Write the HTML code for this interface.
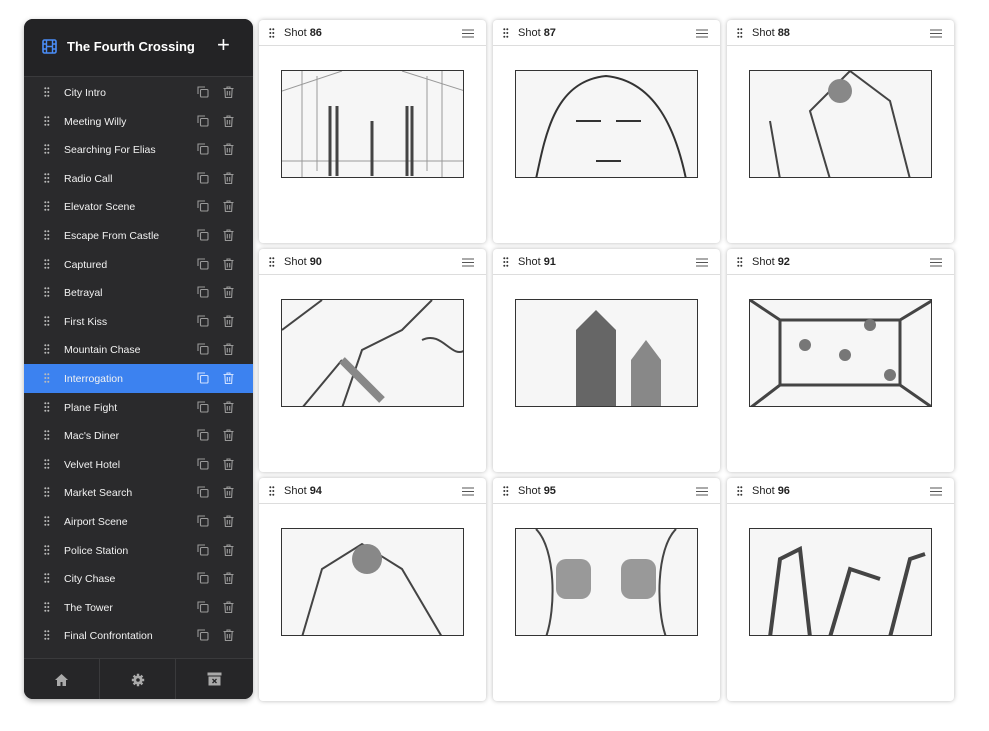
<!DOCTYPE html><html><head><style>
*{margin:0;padding:0;box-sizing:border-box}
body{width:989px;height:731px;background:#fff;font-family:"Liberation Sans",sans-serif;position:relative;overflow:hidden}
.sb{position:absolute;left:24px;top:19px;width:229px;height:680px;background:#2a2a2c;border-radius:9px;overflow:hidden;box-shadow:0 2px 6px rgba(0,0,0,.3)}
.hd{height:58px;background:#232325;border-bottom:1px solid #3a3a3c;position:relative}
.hd .t{position:absolute;left:43px;top:20px;color:#fff;font-weight:bold;font-size:13px}
.hd .p{position:absolute;left:193px;top:13px;color:#fff;font-size:22px;font-weight:300}
.row{position:absolute;left:0;width:229px;height:28.6px;color:#f2f2f2;font-size:10.5px}
.row span{position:absolute;left:40px;top:9px}
.row.sel{background:#3c82f0}
.dots{position:absolute;left:20px;top:9px}
.ic{position:absolute;top:8px}
.ft{position:absolute;left:0;bottom:0;width:229px;height:41px;border-top:1px solid #3a3a3c;background:#262628}
.ft div{position:absolute;top:0;height:41px;width:76px;border-right:1px solid #3a3a3c}
.card{position:absolute;width:227px;height:223px;background:#fff;border-radius:4px;box-shadow:0 0 5px rgba(0,0,0,.28)}
.card .h{height:26px;border-bottom:1px solid #ddd;position:relative;font-size:11px;color:#222}
.card .h span{position:absolute;left:25px;top:7px}
.card .img{position:absolute;left:22px;top:50px;width:183px;height:108px;border:1px solid #333;background:#f6f6f6;overflow:hidden}
</style></head><body>
<div class="sb">
<div class="hd">
<svg style="position:absolute;left:18px;top:20px" width="15" height="15" viewBox="0 0 15 15"><rect x="1" y="1" width="13" height="13" rx="1.5" fill="none" stroke="#4a8df8" stroke-width="1.6"/><path d="M4.5 1v13M10.5 1v13M1 5h3.5M1 10h3.5M10.5 5H14M10.5 10H14M4.5 7.5h6" stroke="#4a8df8" stroke-width="1.4"/></svg>
<div class="t">The Fourth Crossing</div><div class="p">+</div></div>
<div id="rows"></div>
<div class="ft"><div style="left:0"></div><div style="left:76px"></div>
<svg style="position:absolute;left:30px;top:14px" width="15" height="14" viewBox="0 0 15 14"><path d="M7.5 1L1 7h2v6h3.5V9h2v4H12V7h2z" fill="#aaa"/></svg>
<svg style="position:absolute;left:107px;top:14px" width="14" height="14" viewBox="0 0 14 14"><circle cx="7" cy="7" r="4.5" fill="#aaa"/><circle cx="7" cy="7" r="1.8" fill="#262628"/><g stroke="#aaa" stroke-width="2.4"><path d="M7 0.8v2.4M7 10.8v2.4M0.8 7h2.4M10.8 7h2.4M2.6 2.6l1.7 1.7M9.7 9.7l1.7 1.7M2.6 11.4l1.7-1.7M9.7 4.3l1.7-1.7"/></g></svg>
<svg style="position:absolute;left:183px;top:13px" width="15" height="15" viewBox="0 0 15 15"><rect x="0.5" y="0.5" width="14" height="3" fill="#aaa"/><rect x="1.5" y="4.5" width="12" height="9" fill="#aaa"/><path d="M5.5 7l4 4M9.5 7l-4 4" stroke="#262628" stroke-width="1.3"/></svg>
</div>
</div>
<div id="cards"></div>
<script>
var names=["City Intro","Meeting Willy","Searching For Elias","Radio Call","Elevator Scene","Escape From Castle","Captured","Betrayal","First Kiss","Mountain Chase","Interrogation","Plane Fight","Mac's Diner","Velvet Hotel","Market Search","Airport Scene","Police Station","City Chase","The Tower","Final Confrontation",""];
var dots='<svg width="6" height="10" viewBox="0 0 6 10"><g fill="#bbb"><circle cx="1.3" cy="1.3" r="1"/><circle cx="4.3" cy="1.3" r="1"/><circle cx="1.3" cy="5" r="1"/><circle cx="4.3" cy="5" r="1"/><circle cx="1.3" cy="8.7" r="1"/><circle cx="4.3" cy="8.7" r="1"/></g></svg>';
function icons(c){return '<svg class="ic" style="left:173px" width="12" height="12" viewBox="0 0 12 12"><path d="M1 8V1h7" fill="none" stroke="'+c+'" stroke-width="1.1"/><rect x="3.5" y="3.5" width="7.5" height="7.5" rx="1" fill="none" stroke="'+c+'" stroke-width="1.1"/></svg><svg class="ic" style="left:199px" width="11" height="12" viewBox="0 0 11 12"><path d="M0.5 2.5h10M4 2.5V1h3v1.5M1.8 2.5l.6 9h6.2l.6-9M4.3 5v4.5M6.7 5v4.5" fill="none" stroke="'+c+'" stroke-width="1.1"/></svg>';}
var h='';names.forEach(function(n,i){var s=i==10;h+='<div class="row'+(s?' sel':'')+'" style="top:'+(59+i*28.6)+'px"><div class="dots">'+dots+'</div><span>'+n+'</span>'+icons(s?'#cfe0ff':'#999')+'</div>';});
document.getElementById('rows').innerHTML=h;
var shots=[86,87,88,90,91,92,94,95,96],xs=[259,493,727],ys=[20,249,478],c='';
var art=[
'<path d="M0 20L60 0M183 20L120 0M20 0v108M35 5v95M160 0v108M145 5v95M0 90h183" stroke="#999" fill="none"/><path d="M48 35v70M55 35v70M90 50v55M125 35v70M130 35v70" stroke="#444" stroke-width="3"/>',
'<path d="M20 108C30 60 40 10 90 5C140 10 160 60 170 108M60 50h25M100 50h25M80 90h25" stroke="#333" stroke-width="2" fill="none"/>',
'<path d="M80 108L60 40L100 0L140 30L160 108M30 108L20 50" stroke="#444" stroke-width="2" fill="none"/><circle cx="90" cy="20" r="12" fill="#888"/>',
'<path d="M0 30L40 0M60 108L80 50L120 30L150 0M140 40C160 30 170 60 183 50M20 108L60 60" stroke="#444" stroke-width="2" fill="none"/><path d="M60 60l40 40" stroke="#888" stroke-width="8"/>',
'<path d="M60 108V30L80 10L100 30V108" fill="#666"/><path d="M115 108V60L130 40L145 60V108" fill="#888"/>',
'<path d="M0 0L30 20H150L183 0M0 108L30 85H150L183 108M30 20V85M150 20V85" stroke="#444" stroke-width="3" fill="none"/><g fill="#777"><circle cx="55" cy="45" r="6"/><circle cx="95" cy="55" r="6"/><circle cx="140" cy="75" r="6"/><circle cx="120" cy="25" r="6"/></g>',
'<path d="M20 108L40 40L80 15L120 40L160 108" stroke="#444" stroke-width="2" fill="none"/><circle cx="85" cy="30" r="15" fill="#888"/>',
'<path d="M20 0C40 20 40 80 30 108M160 0C140 20 140 80 150 108" stroke="#444" stroke-width="2" fill="none"/><rect x="40" y="30" width="35" height="40" rx="10" fill="#999"/><rect x="105" y="30" width="35" height="40" rx="10" fill="#999"/>',
'<path d="M20 108L30 30L50 20L60 108M80 108L100 40L130 50M140 108L160 30L175 25" stroke="#444" stroke-width="4" fill="none"/>'];
shots.forEach(function(s,i){c+='<div class="card" style="left:'+xs[i%3]+'px;top:'+ys[Math.floor(i/3)]+'px"><div class="h"><div style="position:absolute;left:10px;top:8px">'+dots.replace(/#bbb/,'#333')+'</div><span>Shot <b>'+s+'</b></span><svg style="position:absolute;right:12px;top:9px" width="12" height="9" viewBox="0 0 12 9"><path d="M0 1h12M0 4.5h12M0 8h12" stroke="#555" stroke-width="1.1"/></svg></div><div class="img"><svg width="183" height="108" viewBox="0 0 183 108">'+art[i]+'</svg></div></div>';});
document.getElementById('cards').innerHTML=c;
</script>
</body></html>
